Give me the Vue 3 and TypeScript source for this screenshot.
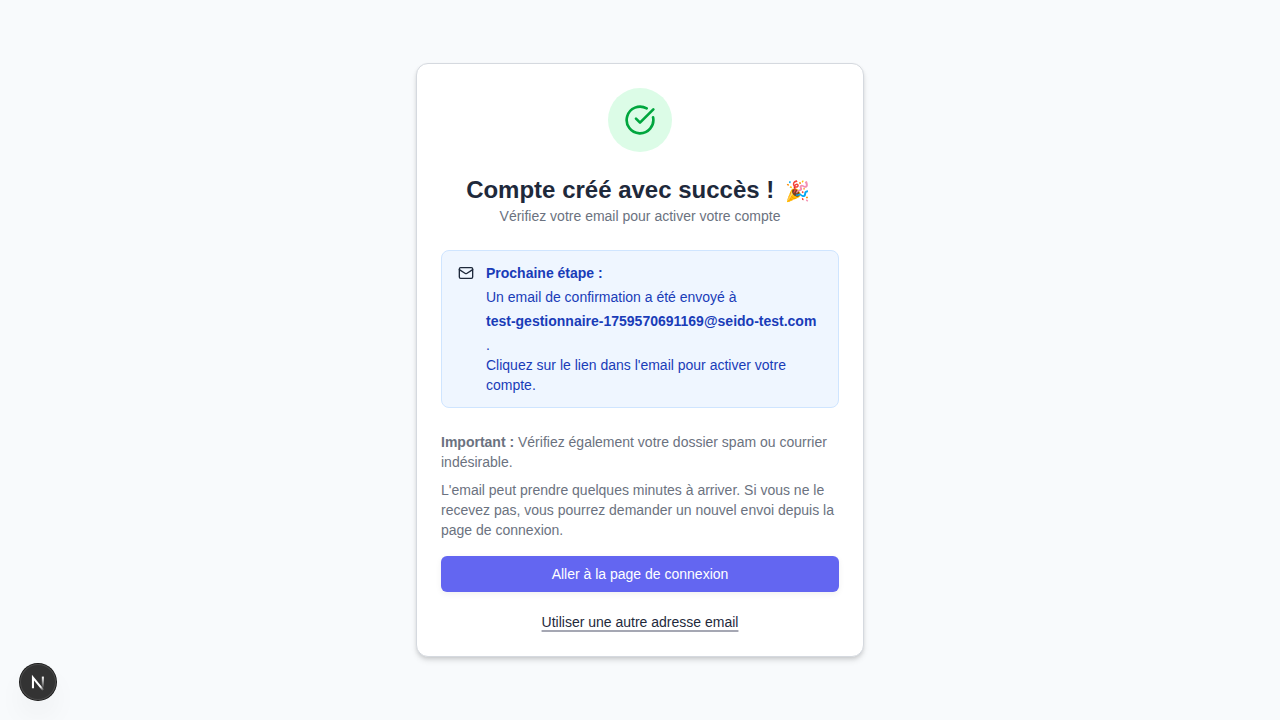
<script setup lang="ts">
const email: string = 'test-gestionnaire-1759570691169@seido-test.com'
</script>

<template>
  <main class="page">
    <section class="card">
      <header class="head">
        <div class="badge">
          <svg class="check" viewBox="0 0 24 24" aria-hidden="true">
            <path d="M21.801 10A10 10 0 1 1 17 3.335" />
            <path d="m9 11 3 3L22 4" />
          </svg>
        </div>
        <h1>Compte créé avec succès ! <span class="emoji">🎉</span></h1>
        <p class="subtitle">Vérifiez votre email pour activer votre compte</p>
      </header>

      <div class="notice" role="alert">
        <svg class="mail" viewBox="0 0 24 24" aria-hidden="true">
          <rect x="2" y="4" width="20" height="16" rx="2" />
          <path d="m22 7-8.991 5.727a2 2 0 0 1-2.009 0L2 7" />
        </svg>
        <div class="notice-text">
          <strong class="notice-title">Prochaine étape :</strong>
          <p class="sent">
            Un email de confirmation a été envoyé à
            <strong class="address">{{ email }}</strong>.
          </p>
          <p class="hint">Cliquez sur le lien dans l'email pour activer votre compte.</p>
        </div>
      </div>

      <div class="notes">
        <p><strong>Important :</strong> Vérifiez également votre dossier spam ou courrier indésirable.</p>
        <p>
          L'email peut prendre quelques minutes à arriver. Si vous ne le recevez pas, vous pourrez
          demander un nouvel envoi depuis la page de connexion.
        </p>
      </div>

      <button class="primary" type="button">Aller à la page de connexion</button>
      <div class="alternate">
        <a href="#">Utiliser une autre adresse email</a>
      </div>
    </section>

    <button class="devtools" type="button" aria-label="Next.js">
      <svg viewBox="0 0 40 40" aria-hidden="true">
        <defs>
          <linearGradient id="diagonal" gradientUnits="userSpaceOnUse" x1="20" y1="20" x2="27" y2="29">
            <stop offset="0" stop-color="#fff" />
            <stop offset="0.5" stop-color="#fff" />
            <stop offset="1" stop-color="#fff" stop-opacity="0" />
          </linearGradient>
          <linearGradient id="stem" gradientUnits="userSpaceOnUse" x1="25" y1="14" x2="25" y2="27">
            <stop offset="0" stop-color="#fff" />
            <stop offset="1" stop-color="#fff" stop-opacity="0" />
          </linearGradient>
        </defs>
        <path d="M14.4 27V15.2L25.8 29" stroke="url(#diagonal)" />
        <path d="M25.4 14V26.5" stroke="url(#stem)" />
      </svg>
    </button>
  </main>
</template>

<style>
body {
  margin: 0;
  background: #f8fafc;
}
</style>

<style scoped>
.page {
  box-sizing: border-box;
  min-height: 100vh;
  padding: 16px;
  display: flex;
  align-items: center;
  justify-content: center;
  background: #f8fafc;
  color: #1e293b;
  font-family: 'Liberation Sans', Arial, 'Noto Color Emoji', sans-serif;
  font-size: 14px;
  line-height: 20px;
}
h1,
p {
  margin: 0;
}
.card {
  box-sizing: border-box;
  width: 100%;
  max-width: 448px;
  padding: 24px;
  border: 1px solid #d5d9df;
  border-radius: 12px;
  background: #fff;
  box-shadow: 0 4px 6px -1px rgb(0 0 0 / 0.12), 0 2px 4px -1px rgb(0 0 0 / 0.12);
}
.head {
  display: flex;
  flex-direction: column;
  align-items: center;
  text-align: center;
}
.badge {
  width: 64px;
  height: 64px;
  margin-bottom: 22px;
  border-radius: 50%;
  display: grid;
  place-items: center;
  background: #dcfce7;
}
svg {
  fill: none;
  stroke-width: 2;
  stroke-linecap: round;
  stroke-linejoin: round;
}
.check {
  width: 32px;
  height: 32px;
  stroke: #00a63e;
}
h1 {
  font-size: 24px;
  line-height: 32px;
  font-weight: 700;
}
.emoji {
  padding: 0 4px;
  font-size: 20px;
  line-height: 20px;
}
.subtitle,
.notes {
  color: #6b7280;
}
.notice {
  margin-top: 24px;
  padding: 12px 16px;
  display: flex;
  gap: 12px;
  border: 1px solid #cfe5ff;
  border-radius: 8px;
  background: #eff6ff;
  color: #193cb8;
}
.mail {
  flex: none;
  width: 16px;
  height: 16px;
  margin-top: 2px;
  stroke: #1e293b;
}
.notice-text {
  min-width: 0;
}
.notice-title {
  display: block;
  margin-bottom: 2px;
}
.sent {
  line-height: 24px;
}
.address {
  display: block;
}
.hint {
  margin-top: -2px;
}
.notes {
  margin-top: 24px;
  display: grid;
  gap: 8px;
}
.primary {
  width: 100%;
  height: 36px;
  margin-top: 16px;
  padding: 0 16px;
  border: 0;
  border-radius: 6px;
  background: #6366f1;
  color: #fff;
  font: inherit;
  box-shadow: 0 2px 6px rgb(0 0 0 / 0.06);
  cursor: pointer;
}
.alternate {
  margin-top: 20px;
  text-align: center;
}
.alternate a {
  color: #1e293b;
  text-decoration: underline;
  text-decoration-color: #a5a7b3;
  text-decoration-thickness: 2px;
  text-underline-offset: 3px;
}
.devtools {
  position: fixed;
  left: 20px;
  bottom: 20px;
  width: 36px;
  height: 36px;
  padding: 0;
  border: 0;
  border-radius: 50%;
  display: grid;
  place-items: center;
  background: #333;
  box-shadow: 0 0 0 1px #171717, inset 0 0 0 1px #4a4a4a, 0 16px 32px -8px rgb(0 0 0 / 0.14);
  cursor: pointer;
}
.devtools svg {
  width: 36px;
  height: 36px;
  stroke-width: 2.3;
  stroke-linecap: butt;
  stroke-linejoin: miter;
}
</style>
